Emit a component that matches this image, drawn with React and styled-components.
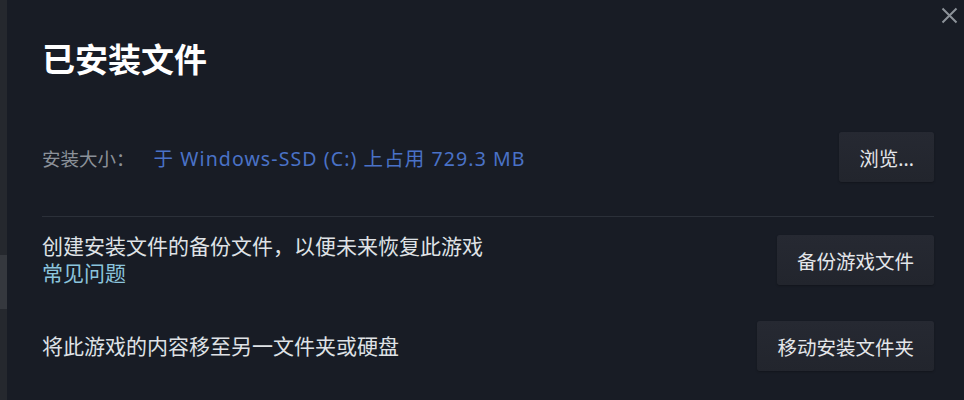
import React from "react";
import styled, { createGlobalStyle } from "styled-components";

const GlobalStyle = createGlobalStyle`
  html, body {
    margin: 0;
    padding: 0;
    background: #181c25;
  }
  #root {
    height: 400px;
  }
`;

const Page = styled.div`
  display: flex;
  width: 964px;
  height: 400px;
  overflow: hidden;
  font-family: "Noto Sans", "Noto Sans CJK SC", sans-serif;
  background: #181c25;
`;

// strip of the window behind the dialog
const BackStrip = styled.div`
  width: 7px;
  flex-shrink: 0;
  display: flex;
  flex-direction: column;
  background: #25282e;
`;

const StripPart = styled.div`
  height: ${(p) => p.h}px;
  background: ${(p) => p.bg};
`;

const Dialog = styled.div`
  position: relative;
  flex: 1;
  display: flex;
  flex-direction: column;
  padding: 38px 30px 0 35px;
  box-sizing: border-box;
`;

const Title = styled.h1`
  margin: 0;
  font-size: 33px;
  line-height: 44px;
  font-weight: 700;
  color: #ffffff;
`;

const CloseButton = styled.button`
  position: absolute;
  top: 5px;
  right: 5px;
  width: 20px;
  height: 20px;
  padding: 0;
  border: none;
  background: none;
  display: flex;
  align-items: center;
  justify-content: center;
  color: #8c9299;
`;

const Row = styled.div`
  display: flex;
  align-items: center;
  justify-content: space-between;
  margin-top: ${(p) => p.top}px;
`;

const InfoLine = styled.div`
  font-size: 18.5px;
  display: flex;
  align-items: baseline;
  gap: 19px;
`;

const Label = styled.span`
  color: #8b9199;
`;

const Value = styled.span`
  color: #4a72c7;
  font-size: 19.5px;
  letter-spacing: 1.1px;
`;

const Text = styled.div`
  display: flex;
  flex-direction: column;
  font-size: 21px;
  line-height: 27px;
  color: #dfe2e6;
`;

const Link = styled.a`
  color: #8bc4dd;
  text-decoration: none;
`;

const Divider = styled.div`
  height: 1px;
  background: #2b3039;
  margin-top: 34px;
`;

const Button = styled.button`
  height: 50px;
  padding: 0 20px;
  border: none;
  border-radius: 3px;
  background: linear-gradient(180deg, #262932 0%, #22252d 100%);
  color: #e4e6ea;
  font-family: inherit;
  font-size: 19.5px;
  white-space: nowrap;
  box-shadow: 0 1px 2px rgba(0, 0, 0, 0.25);
`;

const CloseIcon = () => (
  <svg width="17" height="17" viewBox="0 0 17 17" fill="none" stroke="currentColor" strokeWidth="2">
    <path d="M1.5 1.5 L15.5 15.5 M15.5 1.5 L1.5 15.5" />
  </svg>
);

export default function App() {
  return (
    <>
      <GlobalStyle />
      <Page>
        <BackStrip>
          <StripPart h={255} bg="#25282e" />
          <StripPart h={54} bg="#35383e" />
          <StripPart h={91} bg="#25282e" />
        </BackStrip>
        <Dialog>
          <CloseButton aria-label="关闭">
            <CloseIcon />
          </CloseButton>
          <Title>已安装文件</Title>

          <Row top={50}>
            <InfoLine>
              <Label>安装大小：</Label>
              <Value>于 Windows-SSD (C:) 上占用 729.3 MB</Value>
            </InfoLine>
            <Button>浏览...</Button>
          </Row>

          <Divider />

          <Row top={16}>
            <Text>
              <span>创建安装文件的备份文件，以便未来恢复此游戏</span>
              <Link href="#">常见问题</Link>
            </Text>
            <Button>备份游戏文件</Button>
          </Row>

          <Row top={34}>
            <Text>
              <span>将此游戏的内容移至另一文件夹或硬盘</span>
            </Text>
            <Button>移动安装文件夹</Button>
          </Row>
        </Dialog>
      </Page>
    </>
  );
}
